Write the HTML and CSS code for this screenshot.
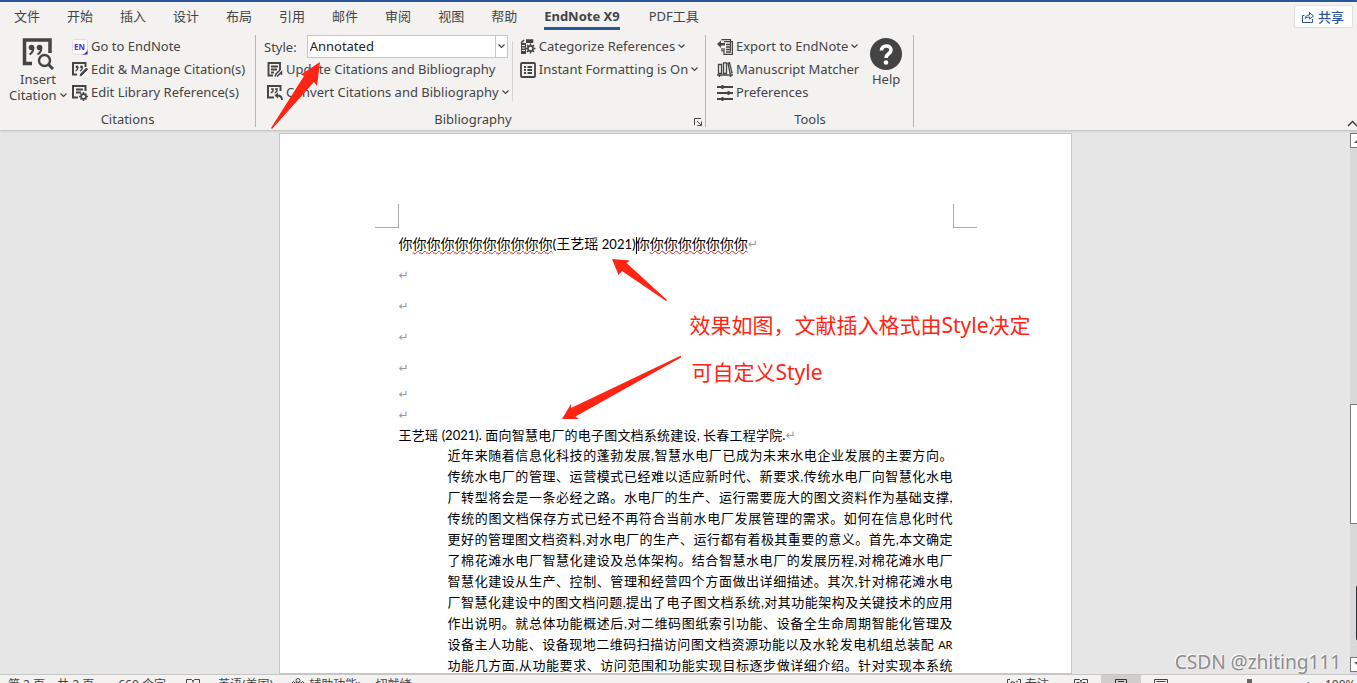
FILE: index.html
```html
<!DOCTYPE html>
<html lang="zh-CN">
<head>
<meta charset="utf-8">
<title>Word - EndNote X9</title>
<link rel="stylesheet" href="styles.css">
</head>
<body>
<div class="app">
  <header class="ribbon">
    <nav class="tabs">
      <a class="tab" href="#">文件</a>
      <a class="tab" href="#">开始</a>
      <a class="tab" href="#">插入</a>
      <a class="tab" href="#">设计</a>
      <a class="tab" href="#">布局</a>
      <a class="tab" href="#">引用</a>
      <a class="tab" href="#">邮件</a>
      <a class="tab" href="#">审阅</a>
      <a class="tab" href="#">视图</a>
      <a class="tab" href="#">帮助</a>
      <a class="tab active" href="#">EndNote X9</a>
      <a class="tab" href="#">PDF工具</a>
      <button class="share" type="button">
        <svg width="12" height="12" viewBox="0 0 12 12" fill="none" stroke="#2b579a"><path d="M2.500 4.500H.5v7h10V8M3 7.500C3.500 5 5 4 7.500 4V1.500L11.500 5 7.500 8V6C5.500 6 4 6.500 3 7.500z"/></svg>
        共享
      </button>
    </nav>
    <div class="groups">
      <section class="group citations">
        <div class="controls">
          <button class="big" type="button">
            <svg width="32" height="32" viewBox="0 0 32 32" fill="none" stroke="#444"><path d="M10 25.500H2.500V2H28v13" stroke-width="3.500"/><g fill="#444" stroke="none"><circle cx="9.500" cy="9.500" r="2.800"/><circle cx="17.500" cy="9.500" r="2.800"/></g><path d="M11.300 9.500C11.500 13 10 15 7.500 16.500M19.300 9.500C19.500 13 18 15 15.500 16.500" stroke-width="2"/><circle cx="22.500" cy="22.500" r="5.500" stroke-width="2.400" fill="#f3f2f1"/><path d="M26.500 26.500L31 31" stroke-width="3"/></svg>
            <span>Insert<br>Citation <svg class="chev" width="7" height="5" viewBox="0 0 7 5"><path d="M.5.5l3 3 3-3"/></svg></span>
          </button>
          <div class="stack">
            <button class="cmd" type="button"><svg width="16" height="16" viewBox="0 0 16 16"><rect x=".5" y=".5" width="15" height="15" rx="2" fill="#fff" stroke="#ddd"/><path d="M15.500 10v5.500H10C13.500 14.500 15 13 15.500 10z" fill="#4b12c9"/><text x="2" y="11" class="en-logo">EN</text></svg>Go to EndNote</button>
            <button class="cmd" type="button"><svg width="16" height="16" viewBox="0 0 16 16" fill="none" stroke="#444"><path d="M5 12.500H1V1h12.500v4" stroke-width="2"/><circle cx="5" cy="5" r="1.400" fill="#444" stroke="none"/><circle cx="9.500" cy="5" r="1.400" fill="#444" stroke="none"/><path d="M6 5q0 3-2.500 4M10.500 5q0 3-2.500 4" stroke-width="1.200"/><path d="M8 14l1-2.500L14.500 6l1 1.500L10 13z" fill="#444"/></svg>Edit &amp; Manage Citation(s)</button>
            <button class="cmd" type="button"><svg width="16" height="16" viewBox="0 0 16 16" fill="none" stroke="#444"><path d="M6 12.500H1V1h12.500v5M4 4.500h7M4 7.500h5" stroke-width="2"/><circle cx="11.500" cy="11.500" r="2.400" stroke-width="1.600"/><path d="M11.500 7v2M11.500 14v2M7 11.500h2M14 11.500h2M8.500 8.500l1 1M13.500 13.500l1 1M14.500 8.500l-1 1M9.500 13.500l-1 1" stroke-width="1.500"/></svg>Edit Library Reference(s)</button>
          </div>
        </div>
        <h2 class="caption">Citations</h2>
      </section>
      <section class="group bibliography">
        <div class="controls">
          <div class="stack">
            <div class="style-row">
              <label for="style">Style:</label>
              <span class="combo">
                <select id="style"><option>Annotated</option></select>
                <svg class="chev" width="7" height="5" viewBox="0 0 7 5"><path d="M.5.5l3 3 3-3"/></svg>
              </span>
            </div>
            <button class="cmd" type="button"><svg width="16" height="16" viewBox="0 0 16 16" fill="none" stroke="#444"><path d="M6 13.500H1.500V1H13v7M4 4.500h7M4 7.500h6M4 10.500h3" stroke-width="1.900"/><path d="M8 14.500l1-2.500 4-4M10 14.500l4.500-4.500v3" stroke-width="1.500"/></svg>Update Citations and Bibliography</button>
            <button class="cmd" type="button"><svg width="16" height="16" viewBox="0 0 16 16" fill="none" stroke="#444"><path d="M7 12.500H1V1h12.500v5" stroke-width="2"/><path d="M4 4h2v2L4 8M8 4h2v2L8 8" stroke-width="1.500"/><path d="M15 15c0-3-1.500-4.500-5-4.500" stroke-width="1.800"/><path d="M7.500 10.500L11 7.500v6z" fill="#444" stroke="none"/></svg>Convert Citations and Bibliography<svg class="chev" width="7" height="5" viewBox="0 0 7 5"><path d="M.5.5l3 3 3-3"/></svg></button>
          </div>
          <div class="stack divided">
            <button class="cmd" type="button"><svg width="16" height="16" viewBox="0 0 16 16" fill="none" stroke="#444"><path d="M1 4l3-3M6 1h6.500v3" stroke-width="1.600"/><path d="M1 4h5v11H1zM6 1h6v3H6z" fill="#444" stroke="none"/><path d="M2 6.500h3M2 9h3M2 11.500h3" stroke="#f3f2f1"/><circle cx="10.500" cy="9.500" r="4.500" fill="#f3f2f1" stroke="none"/><circle cx="10.500" cy="9.500" r="2.600" stroke-width="1.600"/><path d="M10.500 4.500v2M10.500 12.500v2M5.500 9.500h2M13.500 9.500h2M7 6l1.500 1.500M12.500 11.500L14 13M14 6l-1.500 1.500M8.500 11.500L7 13" stroke-width="1.500"/></svg>Categorize References<svg class="chev" width="7" height="5" viewBox="0 0 7 5"><path d="M.5.5l3 3 3-3"/></svg></button>
            <button class="cmd" type="button"><svg width="16" height="16" viewBox="0 0 16 16" fill="none" stroke="#444"><rect x="1" y="1" width="14" height="14" rx="1" stroke-width="1.800"/><path d="M4 5h2M4 8h2M4 11h2M7.500 5H12M7.500 8H12M7.500 11H12" stroke-width="1.800"/></svg>Instant Formatting is On<svg class="chev" width="7" height="5" viewBox="0 0 7 5"><path d="M.5.5l3 3 3-3"/></svg></button>
          </div>
        </div>
        <div class="caption-row">
          <h2 class="caption">Bibliography</h2>
          <button class="launcher" type="button" aria-label="Bibliography settings"><svg width="8" height="8" viewBox="0 0 8 8" fill="none" stroke="#444"><path d="M.5 7V.5H7M3 3l4 4M7.500 3.500v4h-4"/></svg></button>
        </div>
        <svg class="arrow arrow-style" width="52" height="70" viewBox="0 0 52 70" fill="#ff2414"><path d="M50 2L31 14.500 34 16 1 68l1 1L44 22l3 4z"/></svg>
      </section>
      <section class="group tools">
        <div class="controls">
          <div class="stack">
            <button class="cmd" type="button"><svg width="16" height="16" viewBox="0 0 16 16" fill="none" stroke="#444"><path d="M5 1.500V.6h8.500V12M5 9v3h2" stroke-width="1.200"/><path d="M7 2.600h8.400v12.800H7V9" stroke-width="1.200"/><path d="M9 5.500h5M9 8h5M9 10.500h5M9 13h5" stroke-width="1.300"/><path d="M0 5l4-3.500V4h4v2.500H4V9z" fill="#444" stroke="none"/></svg>Export to EndNote<svg class="chev" width="7" height="5" viewBox="0 0 7 5"><path d="M.5.5l3 3 3-3"/></svg></button>
            <button class="cmd" type="button"><svg width="16" height="16" viewBox="0 0 16 16" fill="none" stroke="#444"><path d="M1.500 2.500h3v9h-3zM6.500.8h3v10.700h-3zM11 1.200l1.500-.4 2.500 10-2 .5z" stroke-width="1.300"/><path d="M0 13h16M2.500 13v2M13.500 13v2" stroke-width="1.500"/></svg>Manuscript Matcher</button>
            <button class="cmd" type="button"><svg width="16" height="16" viewBox="0 0 16 16" fill="none" stroke="#444"><path d="M0 2h16M0 8h16M0 14h16" stroke-width="2"/><path d="M5.500 0v4M11.500 6v4M5.500 12v4" stroke-width="2"/></svg>Preferences</button>
          </div>
          <button class="big help" type="button">
            <svg width="32" height="32" viewBox="0 0 32 32" fill="none"><circle cx="16" cy="16" r="16" fill="#444"/><path d="M11.500 12.500c0-6 9.500-6 9.500-.5 0 4-5 3.500-5 8" stroke="#fff" stroke-width="3.600"/><circle cx="16" cy="24.500" r="2.300" fill="#fff"/></svg>
            <span>Help</span>
          </button>
        </div>
        <h2 class="caption">Tools</h2>
      </section>
      <button class="collapse" type="button" aria-label="折叠功能区"><svg width="11" height="7" viewBox="0 0 11 7" fill="none" stroke="#333" stroke-width="1.300"><path d="M1 6l4.500-4.500L10 6"/></svg></button>
    </div>
  </header>

  <main class="workspace">
    <div class="canvas">
      <article class="page">
        <div class="crop-marks"><i class="mark left"></i><i class="mark right"></i></div>
        <p class="line">你<span class="typo">你你你你你你你你你你</span>(王艺瑶 <span class="num">2021</span>)<i class="caret"></i>你<span class="typo">你你你你你你你</span><span class="pm">↵</span></p>
        <p class="line"><span class="pm">↵</span></p>
        <p class="line"><span class="pm">↵</span></p>
        <p class="line"><span class="pm">↵</span></p>
        <p class="line"><span class="pm">↵</span></p>
        <p class="line tight"><span class="pm">↵</span></p>
        <p class="line tight"><span class="pm">↵</span></p>
        <p class="reference">王艺瑶 (2021). 面向智慧电厂的电子图文档系统建设, 长春工程学院.<span class="pm">↵</span></p>
        <p class="abstract">近年来随着信息化科技的蓬勃发展,智慧水电厂已成为未来水电企业发展的主要方向。<br>传统水电厂的管理、运营模式已经难以适应新时代、新要求,传统水电厂向智慧化水电<br>厂转型将会是一条必经之路。水电厂的生产、运行需要庞大的图文资料作为基础支撑,<br>传统的图文档保存方式已经不再符合当前水电厂发展管理的需求。如何在信息化时代<br>更好的管理图文档资料,对水电厂的生产、运行都有着极其重要的意义。首先,本文确定<br>了棉花滩水电厂智慧化建设及总体架构。结合智慧水电厂的发展历程,对棉花滩水电厂<br>智慧化建设从生产、控制、管理和经营四个方面做出详细描述。其次,针对棉花滩水电<br>厂智慧化建设中的图文档问题,提出了电子图文档系统,对其功能架构及关键技术的应用<br>作出说明。就总体功能概述后,对二维码图纸索引功能、设备全生命周期智能化管理及<br>设备主人功能、设备现地二维码扫描访问图文档资源功能以及水轮发电机组总装配 <small>AR</small><br>功能几方面,从功能要求、访问范围和功能实现目标逐步做详细介绍。针对实现本系统</p>
        <svg class="arrow arrow-cite" width="58" height="44" viewBox="0 0 58 44" fill="#ff2414"><path d="M1 1l18 1.500-3.500 2.500L56 42l-1 1L11 13 7.500 17z"/></svg>
        <svg class="arrow arrow-ref" width="122" height="66" viewBox="0 0 122 66" fill="#ff2414"><path d="M1 64L10 49v4L119 1h1v1.500L14.500 61.500 18 64z"/></svg>
        <p class="note note-effect">效果如图，文献插入格式由Style决定</p>
        <p class="note note-custom">可自定义Style</p>
      </article>
    </div>
    <div class="scrollbar">
      <button class="step" type="button" aria-label="向上滚动"><svg width="8" height="5" viewBox="0 0 8 5" fill="#555"><path d="M0 5l4-4 4 4z"/></svg></button>
      <div class="thumb"></div>
      <div class="dock"></div>
      <button class="step" type="button" aria-label="向下滚动"><svg width="8" height="5" viewBox="0 0 8 5" fill="#555"><path d="M0 0l4 4 4-4z"/></svg></button>
    </div>
    <div class="watermark">CSDN @zhiting111</div>
  </main>

  <footer class="status">
    <span class="pages">第 2 页，共 2 页</span>
    <span class="words">660 个字</span>
    <svg class="proof" width="14" height="13" viewBox="0 0 14 13" fill="none" stroke="#444"><path d="M.5.500h5L7 2 8.500.500h5v10h-5L7 12l-1.500-1.500h-5zM7 2v9"/></svg>
    <span class="lang">英语(美国)</span>
    <svg width="14" height="14" viewBox="0 0 14 14" fill="none" stroke="#444"><circle cx="7" cy="2.500" r="2"/><path d="M1 5q1-3 3 0h6q2-3 3 0l-4 2v5H5V7z"/></svg>
    <span class="access">辅助功能: 一切就绪</span>
    <span class="focus"><svg width="14" height="13" viewBox="0 0 14 13" fill="none" stroke="#444"><path d="M3 .500H.5V12H3M11 .500h2.500V12H11M4 3h3l2 2v5H4zM9 2l2 1"/></svg>专注</span>
    <button class="view" type="button" aria-label="阅读视图"><svg width="14" height="13" viewBox="0 0 14 13" fill="none" stroke="#444"><path d="M.5.500h5L7 2 8.500.500h5v10h-5L7 12l-1.500-1.500h-5zM7 2v9M2.500 3.500h3M8.500 3.500h3"/></svg></button>
    <button class="view selected" type="button" aria-label="页面视图"><svg width="12" height="13" viewBox="0 0 12 13" fill="none" stroke="#333"><path d="M.5.500h11v12H.5zM3 2.500h6M3 4.500h6M3 6.500h6"/></svg></button>
    <button class="view" type="button" aria-label="Web 版式"><svg width="14" height="13" viewBox="0 0 14 13" fill="none" stroke="#444"><path d="M.5 10V.500h13V6M2.500 2.500h9M2.500 4.500h5"/></svg></button>
    <input class="zoom" type="range" min="0" max="100" value="54" aria-label="缩放">
    <span class="plus">+</span>
    <span class="percent">100%</span>
  </footer>
</div>
</body>
</html>
```
FILE: styles.css
```css
* { box-sizing: border-box; }
body {
  margin: 0;
  overflow: hidden;
  font-family: "Noto Sans", "Noto Sans CJK SC", sans-serif;
  font-size: 13px;
  color: #444;
}
p, h2 { margin: 0; }
button {
  border: 0;
  padding: 0;
  background: none;
  font: inherit;
  color: inherit;
}
.app {
  display: flex;
  flex-direction: column;
  height: calc(100vh + 12px);
}

/* Ribbon */
.ribbon {
  position: relative;
  z-index: 1;
  flex: none;
  background: #f3f2f1;
  border-top: 2px solid #2b579a;
  box-shadow: 0 1px 2px #bbb;
}
.tabs {
  display: flex;
  align-items: flex-start;
  gap: 27px;
  padding: 3px 4px 0 14px;
  height: 33px;
}
.tab {
  line-height: 23px;
  color: #444;
  text-decoration: none;
  white-space: nowrap;
}
.tab.active {
  margin-right: 2px;
  border-bottom: 3px solid #2b579a;
  font-weight: 700;
  line-height: 22px;
}
.share {
  display: flex;
  align-items: center;
  gap: 4px;
  margin-left: auto;
  padding: 0 8px 0 7px;
  height: 23px;
  background: #fff;
  border: 1px solid #e1dfdd;
  border-radius: 2px;
  color: #2b579a;
  font-weight: 500;
}
.groups {
  display: flex;
  height: 95px;
}
.group {
  position: relative;
  display: flex;
  flex-direction: column;
  justify-content: space-between;
  height: 92px;
  border-right: 1px solid #b8b6b4;
}
.citations { width: 256px; padding-left: 10px; }
.bibliography { width: 450px; padding-left: 8px; }
.tools { width: 208px; padding-left: 11px; }
.controls { display: flex; }
.stack {
  display: flex;
  flex-direction: column;
  align-items: flex-start;
}
.cmd {
  display: flex;
  align-items: center;
  gap: 3px;
  height: 23px;
  line-height: 23px;
  white-space: nowrap;
}
.bibliography .stack:first-child .cmd { margin-left: 3px; }
.chev { fill: none; stroke: #444; stroke-width: 1.2; }
.en-logo { font: 700 8px "Noto Sans", sans-serif; fill: #5a1fe0; }
.big {
  display: flex;
  flex-direction: column;
  align-items: center;
  width: 56px;
  margin-right: 6px;
  padding-top: 3px;
  line-height: 16px;
  white-space: nowrap;
}
.big span { padding-top: 1px; }
.big .chev { vertical-align: 2px; }
.help { margin: 0; }
.style-row {
  display: flex;
  align-items: center;
  gap: 10px;
  height: 23px;
}
.combo {
  display: flex;
  align-items: center;
  width: 201px;
  height: 23px;
  background: #fff;
  border: 1px solid #c8c6c4;
}
.combo select {
  flex: 1;
  height: 21px;
  padding: 0 0 2px 2px;
  appearance: none;
  border: 0;
  border-right: 1px solid #c8c6c4;
  background: none;
  font: inherit;
  color: #222;
}
.combo .chev { margin: 0 2px; }
.divided {
  height: 60px;
  margin: 6px 0 0 3px;
  padding-left: 7px;
  border-left: 1px solid #d6d4d2;
}
.divided .cmd:first-child { margin-top: -6px; }
.caption {
  font-size: 13px;
  font-weight: 400;
  line-height: 16px;
  text-align: center;
}
.citations .caption, .tools .caption { padding-right: 10px; }
.caption-row {
  display: grid;
  grid-template-columns: 430px 1fr;
  padding-right: 3px;
}
.caption-row .caption { padding-right: 12px; }
.launcher {
  justify-self: end;
  align-self: end;
  height: 10px;
  line-height: 0;
}
.collapse {
  align-self: flex-end;
  margin: 0 -1px 3px auto;
  line-height: 0;
}

/* Document area */
.workspace {
  position: relative;
  display: flex;
  flex: 1;
  min-height: 0;
  background: #e6e6e6;
}
.canvas {
  flex: 1;
  display: flex;
  justify-content: center;
  padding-top: 3px;
  overflow: hidden;
}
.page {
  position: relative;
  width: 793px;
  padding: 70px 118px 0 119px;
  background: #fff;
  border: 1px solid #c6c6c6;
  color: #000;
  font-family: Lato, "Noto Sans CJK SC", sans-serif;
}
.crop-marks {
  display: flex;
  justify-content: space-between;
  margin: 0 -24px;
}
.mark {
  width: 24px;
  height: 24px;
  border-bottom: 1px solid #ababab;
}
.mark.left { border-right: 1px solid #ababab; }
.mark.right { border-left: 1px solid #ababab; }
.line {
  height: 31px;
  font-size: 14px;
  line-height: 31px;
  white-space: nowrap;
}
.line.tight { height: 21px; line-height: 21px; }
.num { font-size: 13px; }
.typo {
  text-decoration: underline wavy #e02020 1px;
  text-underline-offset: 1px;
}
.pm {
  font: 12px "DejaVu Sans", sans-serif;
  line-height: 16px;
  vertical-align: 1px;
  color: #999;
}
.caret {
  display: inline-block;
  height: 17px;
  margin-right: -1px;
  border-left: 1px solid #000;
  vertical-align: middle;
}
.reference, .abstract {
  font-size: 13px;
  line-height: 21px;
  white-space: nowrap;
  text-align: justify;
  text-align-last: justify;
}
.reference { width: 397px; }
.abstract { margin-top: -1px; padding-left: 49px; }
.abstract small { font-size: 11px; line-height: 16px; }

/* Annotations over the document */
.arrow { position: absolute; }
.arrow-style { left: 14px; top: 25px; }
.arrow-cite { left: 331px; top: 124px; }
.arrow-ref { left: 281px; top: 221px; }
.note {
  position: absolute;
  font-family: "Noto Sans", "Noto Sans CJK SC", sans-serif;
  font-size: 21px;
  line-height: 30px;
  color: #ff2414;
  white-space: nowrap;
}
.note-effect { left: 410px; top: 176px; }
.note-custom { left: 412px; top: 223px; }
.watermark {
  position: absolute;
  right: 16px;
  bottom: 0;
  font-size: 19px;
  line-height: 24px;
  color: #8c8c8c;
  text-shadow: -1px -1px 0 #fff;
}

/* Scrollbar */
.scrollbar {
  display: flex;
  flex-direction: column;
  width: 7px;
  padding: 3px 0 2px;
  background: #d9d9d9;
  overflow: hidden;
}
.step {
  flex: none;
  width: 16px;
  height: 15px;
  border: 1px solid #777;
  background: #fff;
  line-height: 0;
}
.thumb {
  flex: none;
  width: 16px;
  height: 120px;
  margin-top: 256px;
  border: 1px solid #777;
  background: #fff;
}
.dock {
  flex: none;
  width: 16px;
  height: 56px;
  margin: 61px 0 auto 6px;
  border-radius: 3px;
  background: #2f3338;
}

/* Status bar */
.status {
  display: flex;
  align-items: center;
  flex: none;
  height: 21px;
  padding-left: 8px;
  background: #f3f2f1;
  border-top: 1px solid #c6c6c6;
  font-size: 12px;
  line-height: 16px;
  white-space: nowrap;
}
.words { margin: 0 20px 0 24px; }
.lang { margin: 0 18px; }
.access { margin-left: 4px; }
.focus {
  display: flex;
  align-items: center;
  gap: 4px;
  margin: 0 12px 0 auto;
}
.view {
  display: flex;
  align-items: center;
  justify-content: center;
  width: 40px;
  height: 20px;
}
.view.selected { background: #d0cecc; }
.zoom {
  width: 108px;
  height: 16px;
  margin: 0 5px 0 10px;
  appearance: none;
  background: linear-gradient(#999, #999) center / 100% 1px no-repeat;
}
.zoom::-webkit-slider-thumb {
  appearance: none;
  width: 5px;
  height: 12px;
  background: #666;
}
.plus { width: 21px; font-size: 15px; }
.percent { width: 32px; }
```
